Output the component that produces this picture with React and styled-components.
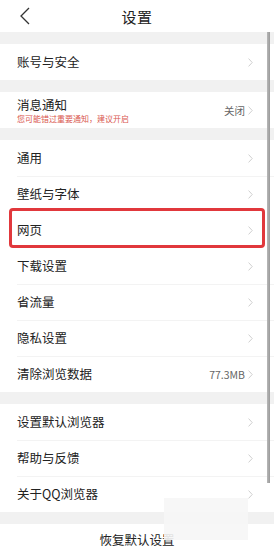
import React from 'react'
import styled, { createGlobalStyle } from 'styled-components'

const GlobalStyle = createGlobalStyle`
  html, body {
    margin: 0;
    padding: 0;
    background: #ffffff;
  }
  body {
    font-family: "Noto Sans CJK SC", "Noto Sans", sans-serif;
    color: #222;
  }
`

const Page = styled.div`
  position: relative;
  width: 274px;
  height: 550px;
  overflow: hidden;
  background: #f1f1f1;
`

const Header = styled.header`
  height: 32px;
  display: flex;
  align-items: center;
  justify-content: center;
  position: relative;
  background: #fff;
`

const BackButton = styled.button`
  position: absolute;
  left: 14px;
  top: 4px;
  width: 22px;
  height: 24px;
  padding: 0;
  border: none;
  background: none;
  display: flex;
  align-items: center;
  justify-content: center;
`

const Title = styled.h1`
  margin: 0;
  font-size: 15px;
  font-weight: 400;
  color: #222;
  letter-spacing: 0.5px;
`

const Group = styled.section`
  background: #fff;
  margin-top: 12px;
`

const Row = styled.div`
  position: relative;
  height: 36px;
  display: flex;
  align-items: center;
  padding: 0 21px 0 17px;

  & + &::before {
    content: '';
    position: absolute;
    top: 0;
    left: 17px;
    right: 0;
    height: 1px;
    background: #f3f3f3;
  }

  ${p => p.$highlight && `
    &::after {
      content: '';
      position: absolute;
      left: 9px;
      right: 9px;
      top: -4px;
      bottom: 0;
      border: 3.5px solid #e1383c;
      border-radius: 4px;
    }
  `}
`

const Labels = styled.div`
  flex: 1;
  display: flex;
  flex-direction: column;
  justify-content: center;
  gap: 2px;
`

const Label = styled.span`
  font-size: 12.5px;
  line-height: 14px;
  color: #222;
`

const Sub = styled.span`
  font-size: 8px;
  line-height: 9px;
  color: #d9574f;
`

const Value = styled.span`
  font-size: 10.5px;
  color: #666;
  margin-right: 3px;
`

const Chevron = () => (
  <svg width="5" height="9" viewBox="0 0 5 9">
    <path d="M0.6 0.6 L4.2 4.5 L0.6 8.4" fill="none" stroke="#c9c9c9" strokeWidth="0.9" />
  </svg>
)

const Footer = styled.div`
  margin-top: 12px;
  background: #fff;
  height: 40px;
  display: flex;
  justify-content: center;
  padding-top: 8px;
  box-sizing: border-box;
  font-size: 12.5px;
  line-height: 16px;
  color: #222;
`

const ScrollThumb = styled.div`
  position: absolute;
  right: 4px;
  top: 32px;
  width: 3px;
  height: 451px;
  background: linear-gradient(to right, #b8b8b8, #9a9a9a);
`

const Patch = styled.div`
  position: absolute;
  left: 164px;
  top: 498px;
  width: 84px;
  height: 42px;
  background: #f6f6f6;
  opacity: 0.9;
`

const SettingRow = ({ label, sub, value, highlight }) => (
  <Row $highlight={highlight}>
    <Labels>
      <Label>{label}</Label>
      {sub && <Sub>{sub}</Sub>}
    </Labels>
    {value && <Value>{value}</Value>}
    <Chevron />
  </Row>
)

const groups = [
  [{ label: '账号与安全' }],
  [{ label: '消息通知', sub: '您可能错过重要通知，建议开启', value: '关闭' }],
  [
    { label: '通用' },
    { label: '壁纸与字体' },
    { label: '网页', highlight: true },
    { label: '下载设置' },
    { label: '省流量' },
    { label: '隐私设置' },
    { label: '清除浏览数据', value: '77.3MB' },
  ],
  [
    { label: '设置默认浏览器' },
    { label: '帮助与反馈' },
    { label: '关于QQ浏览器' },
  ],
]

export default function App() {
  return (
    <>
      <GlobalStyle />
      <Page>
        <Header>
          <BackButton aria-label="返回">
            <svg width="12" height="18" viewBox="0 0 12 18">
              <path d="M10 1 L2 9 L10 17" fill="none" stroke="#333" strokeWidth="1.3" />
            </svg>
          </BackButton>
          <Title>设置</Title>
        </Header>
        {groups.map((items, i) => (
          <Group key={i}>
            {items.map(item => (
              <SettingRow key={item.label} {...item} />
            ))}
          </Group>
        ))}
        <Footer>恢复默认设置</Footer>
        <ScrollThumb />
        <Patch />
      </Page>
    </>
  )
}
